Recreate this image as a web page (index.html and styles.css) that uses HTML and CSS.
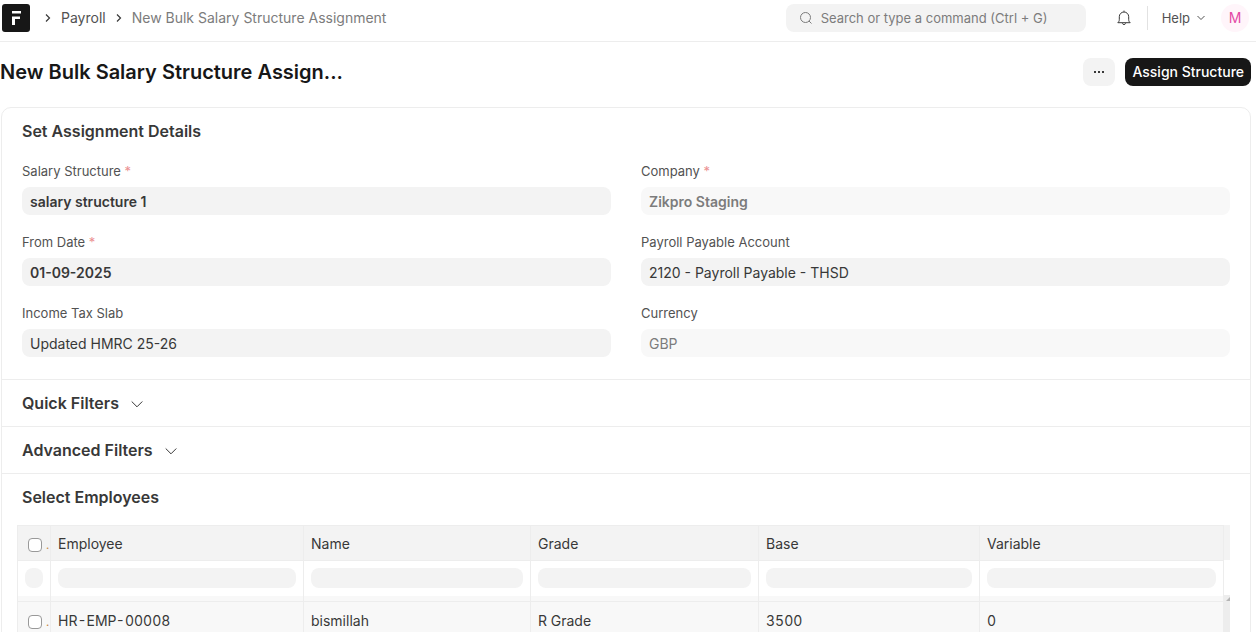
FILE: index.html
```html
<!DOCTYPE html>
<html lang="en">
<head>
    <meta charset="UTF-8">
    <meta name="viewport" content="width=device-width, initial-scale=1.0">
    <title>New Bulk Salary Structure Assignment</title>
    <link rel="stylesheet" href="styles.css">
</head>
<body>
    <header class="navbar">
        <a class="logo" href="#" aria-label="Home">
            <svg width="28" height="28" viewBox="0 0 28 28">
                <rect width="28" height="28" rx="3" fill="#171717"/>
                <path d="M10 7h9v2.500h-9zM10 12.500h8v2.500h-5v6h-3z" fill="#fff"/>
            </svg>
        </a>
        <nav class="breadcrumbs">
            <svg class="separator" width="6" height="8" viewBox="0 0 6 8"><path d="M1 0.5L4.5 4L1 7.5"/></svg>
            <a href="#">Payroll</a>
            <svg class="separator" width="6" height="8" viewBox="0 0 6 8"><path d="M1 0.5L4.5 4L1 7.5"/></svg>
            <a class="current" href="#">New Bulk Salary Structure Assignment</a>
        </nav>
        <div class="search">
            <svg width="14" height="14" viewBox="0 0 14 14"><circle cx="6.5" cy="6.5" r="5"/><path d="M10 10L12.500 12.500"/></svg>
            <input type="text" aria-label="Search" placeholder="Search or type a command (Ctrl + G)">
        </div>
        <button class="bell" type="button" aria-label="Notifications">
            <svg width="16" height="16" viewBox="0 0 16 16">
                <path d="M8 .6v1.200M1.800 12.700h12.400c-1-.9-1.500-1.700-1.500-3V6.700a4.700 4.700 0 0 0-9.400 0v3c0 1.300-.5 2.100-1.500 3z"/>
                <path d="M6.300 13.300a1.800 1.800 0 0 0 3.400 0"/>
            </svg>
        </button>
        <button class="help" type="button">
            Help
            <svg width="8" height="6" viewBox="0 0 8 6"><path d="M0.500 1L4 4.500L7.500 1"/></svg>
        </button>
        <button class="avatar" type="button" aria-label="M, user menu">M</button>
    </header>

    <div class="page-head">
        <h1>New Bulk Salary Structure Assign...</h1>
        <button class="btn-menu" type="button" aria-label="Menu">
            <svg width="12" height="4" viewBox="0 0 12 4"><path d="M1 1h2v2H1zM5 1h2v2H5zM9 1h2v2H9z"/></svg>
        </button>
        <button class="btn-primary" type="button">Assign Structure</button>
    </div>

    <main class="form-card">
        <section class="details">
            <h2>Set Assignment Details</h2>
            <div class="fields">
                <div class="form-group">
                    <label for="salary_structure">Salary Structure <span class="reqd">*</span></label>
                    <input class="bold" type="text" id="salary_structure" value="salary structure 1">
                </div>
                <div class="form-group">
                    <label for="company">Company <span class="reqd">*</span></label>
                    <input class="bold" type="text" id="company" value="Zikpro Staging" disabled>
                </div>
                <div class="form-group">
                    <label for="from_date">From Date <span class="reqd">*</span></label>
                    <input class="bold" type="text" id="from_date" value="01-09-2025">
                </div>
                <div class="form-group">
                    <label for="payable_account">Payroll Payable Account</label>
                    <input type="text" id="payable_account" value="2120 - Payroll Payable - THSD">
                </div>
                <div class="form-group">
                    <label for="tax_slab">Income Tax Slab</label>
                    <input type="text" id="tax_slab" value="Updated HMRC 25-26">
                </div>
                <div class="form-group">
                    <label for="currency">Currency</label>
                    <input type="text" id="currency" value="GBP" disabled>
                </div>
            </div>
        </section>

        <section class="collapsed">
            <h2><button type="button">Quick Filters
                <svg width="12" height="8" viewBox="0 0 12 8"><path d="M0.700 1.500L6 6.800L11.300 1.500"/></svg>
            </button></h2>
        </section>
        <section class="collapsed">
            <h2><button type="button">Advanced Filters
                <svg width="12" height="8" viewBox="0 0 12 8"><path d="M0.700 1.500L6 6.800L11.300 1.500"/></svg>
            </button></h2>
        </section>

        <section class="employees">
            <h2>Select Employees</h2>
            <div class="datatable">
                <table>
                    <colgroup>
                        <col class="col-check">
                        <col class="col-employee">
                        <col class="col-name">
                        <col class="col-grade">
                        <col class="col-base">
                        <col>
                    </colgroup>
                    <thead>
                        <tr>
                            <th class="check"><input type="checkbox" aria-label="Select all"><span>.</span></th>
                            <th>Employee</th>
                            <th>Name</th>
                            <th>Grade</th>
                            <th>Base</th>
                            <th>Variable</th>
                        </tr>
                        <tr class="filters">
                            <td><input type="text" aria-label="Filter rows"></td>
                            <td><input type="text" aria-label="Filter employee"></td>
                            <td><input type="text" aria-label="Filter name"></td>
                            <td><input type="text" aria-label="Filter grade"></td>
                            <td><input type="text" aria-label="Filter base"></td>
                            <td><input type="text" aria-label="Filter variable"></td>
                        </tr>
                    </thead>
                    <tbody>
                        <tr class="spacer"><td></td><td></td><td></td><td></td><td></td><td></td></tr>
                        <tr>
                            <td class="check"><input type="checkbox" aria-label="Select HR-EMP-00008"><span>.</span></td>
                            <td>HR-EMP-00008</td>
                            <td>bismillah</td>
                            <td>R Grade</td>
                            <td>3500</td>
                            <td>0</td>
                        </tr>
                    </tbody>
                </table>
                <div class="gutter">
                    <div class="gutter-head"></div>
                    <div class="scrollbar">
                        <svg width="6" height="6" viewBox="0 0 6 6"><path d="M2 6L6 2V6z"/></svg>
                    </div>
                </div>
            </div>
        </section>
    </main>
</body>
</html>
```

FILE: styles.css
```css
* {
    box-sizing: border-box;
}

body {
    margin: 0;
    height: 100vh;
    overflow: hidden;
    background: #ffffff;
    color: #383838;
    font-family: Inter, sans-serif;
    font-size: 14px;
    line-height: 20px;
}

h1,
h2 {
    margin: 0;
}

a {
    color: inherit;
    text-decoration: none;
}

button,
input {
    margin: 0;
    border: none;
    font: inherit;
    color: inherit;
}

button {
    padding: 0;
    background: none;
    cursor: pointer;
}

svg {
    display: block;
    flex: none;
    fill: none;
    stroke: currentColor;
}

/* Navbar */
.navbar {
    display: flex;
    align-items: center;
    height: 42px;
    padding: 0 7px 5px 2px;
    border-bottom: 1px solid #ededed;
}

.logo svg {
    stroke: none;
}

.breadcrumbs {
    display: flex;
    flex: 1;
    align-items: center;
    gap: 10px;
    margin-left: 15px;
    color: #525252;
}

.breadcrumbs .current {
    color: #7c7c7c;
}

.separator {
    stroke: #383838;
    stroke-width: 1.2;
}

.search {
    display: flex;
    align-items: center;
    gap: 8px;
    width: 300px;
    height: 28px;
    padding: 0 13px;
    border-radius: 8px;
    background: #f3f3f3;
    color: #7c7c7c;
    font-size: 13px;
}

.search input {
    flex: 1;
    padding: 0;
    background: none;
}

.search input::placeholder {
    color: #7c7c7c;
}

.bell {
    margin: 0 15px 0 30px;
    color: #383838;
}

.help {
    display: flex;
    align-items: center;
    gap: 7px;
    height: 24px;
    padding: 0 16px 0 14px;
    border-left: 1px solid #e2e2e2;
    color: #525252;
    font-size: 13px;
}

.avatar {
    width: 28px;
    height: 28px;
    border-radius: 50%;
    background: #fff5fa;
    color: #e34aa6;
}

/* Page head */
.page-head {
    display: flex;
    align-items: center;
    gap: 10px;
    height: 60px;
    margin-bottom: 5px;
    padding-right: 5px;
}

.page-head h1 {
    flex: 1;
    color: #171717;
    font-size: 20px;
    font-weight: 600;
}

.btn-menu {
    display: flex;
    align-items: center;
    justify-content: center;
    width: 32px;
    height: 28px;
    border-radius: 8px;
    background: #f3f3f3;
}

.btn-menu svg {
    fill: #383838;
    stroke: none;
}

.btn-primary {
    height: 28px;
    padding: 0 7px;
    border-radius: 8px;
    background: #171717;
    color: #ffffff;
    font-weight: 500;
}

/* Form */
.form-card {
    margin: 0 5px 0 1px;
    border: 1px solid #ededed;
    border-radius: 10px;
}

.form-card h2 {
    font-size: 16px;
    font-weight: 600;
    line-height: 24px;
}

.details {
    padding: 11px 20px 22px;
}

.fields {
    display: grid;
    grid-template-columns: 1fr 1fr;
    gap: 17px 30px;
    margin-top: 18px;
}

.form-group label {
    display: block;
    margin-bottom: 6px;
    color: #525252;
    font-size: 13px;
}

.form-group input {
    display: block;
    width: 100%;
    height: 28px;
    padding: 0 8px;
    border-radius: 8px;
    background: #f3f3f3;
}

.form-group input.bold {
    font-weight: 600;
}

.form-group input:disabled {
    background: #f8f8f8;
    color: #7c7c7c;
}

.reqd {
    color: #eb9091;
}

.collapsed {
    padding: 11px 20px;
    border-top: 1px solid #ededed;
}

.collapsed button {
    display: flex;
    align-items: center;
    gap: 12px;
}

.collapsed svg {
    margin-top: 2px;
}

.employees {
    padding: 11px 20px 20px 15px;
    border-top: 1px solid #ededed;
}

.employees h2 {
    margin: 0 0 16px 5px;
}

/* Employee table */
.datatable {
    display: flex;
}

table {
    flex: 1;
    border-collapse: collapse;
    table-layout: fixed;
    font-variant-numeric: tabular-nums;
}

.col-check {
    width: 33px;
}

.col-employee {
    width: 253px;
}

.col-name {
    width: 227px;
}

.col-grade {
    width: 228px;
}

.col-base {
    width: 221px;
}

th,
td {
    height: 35px;
    padding: 0 7px;
    border: 1px solid #ededed;
    text-align: left;
}

th {
    padding-top: 2px;
    background: #f3f3f3;
    font-weight: 400;
}

tbody td {
    height: 38px;
    background: #f8f8f8;
}

.filters td {
    border-bottom: none;
}

.filters input {
    display: block;
    width: 100%;
    height: 20px;
    border-radius: 8px;
    background: #f3f3f3;
}

.spacer td {
    height: 6px;
    border-top: none;
}

.check {
    padding: 2px 0 0 10px;
    white-space: nowrap;
}

.check input {
    appearance: none;
    width: 14px;
    height: 14px;
    border: 1px solid #999999;
    border-radius: 4px;
    background: #ffffff;
    vertical-align: -3px;
}

.check span {
    margin-left: 4px;
    color: #c78b45;
    font-size: 12px;
}

.gutter {
    display: flex;
    flex-direction: column;
    width: 6px;
}

.gutter-head {
    height: 35px;
    margin-bottom: 35px;
    background: #f3f3f3;
}

.scrollbar {
    flex: 1;
    background: #ededed;
}

.scrollbar svg {
    fill: #b5b5b5;
    stroke: none;
}
```
